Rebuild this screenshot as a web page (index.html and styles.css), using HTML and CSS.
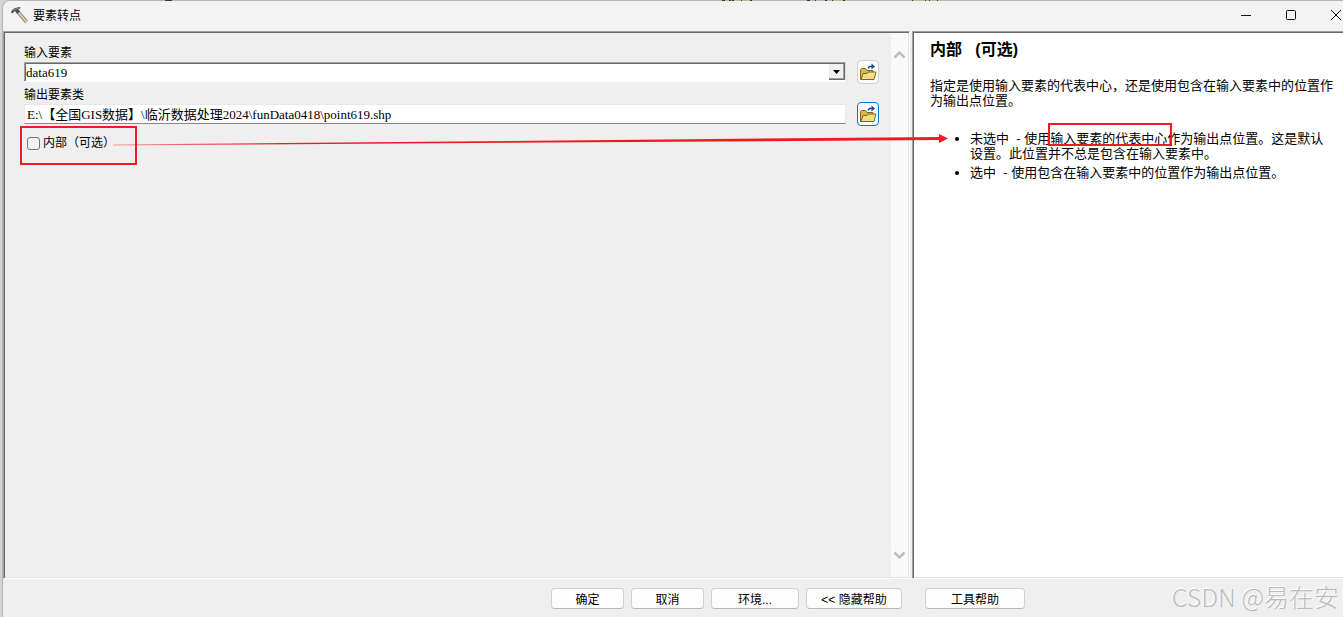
FILE: index.html
```html
<!DOCTYPE html>
<html lang="zh-CN">
<head>
    <meta charset="UTF-8">
    <meta name="viewport" content="width=device-width, initial-scale=1.0">
    <title>要素转点</title>
    <link rel="stylesheet" href="styles.css">
</head>
<body>
    <div class="window">
        <svg class="backdrop" width="780" height="1" aria-hidden="true">
            <path d="M0 .5h7M557 .5h30M642 .5h9M660 .5h20M747 .5h14M764 .5h9" stroke="#38383c"/>
            <path d="M560 .5h4M566 .5h1M569 .5h7M577 .5h8M645 .5h5M662 .5h5M668 .5h10M748 .5h12M765 .5h7" stroke="#bbb98c"/>
        </svg>
        <header class="titlebar">
            <svg class="hammer" width="18" height="18" viewBox="0 0 18 18" aria-hidden="true">
                <path d="M7 5L15.500 15" stroke="#8b8474" stroke-width="3.600"/>
                <path d="M7 5L15.500 15" stroke="#dcd3bb" stroke-width="1.800"/>
                <path d="M0 5.500L1 3 4 1 9 0 9.500 1 7.500 2.500 9 4.500 6 7 4.500 4.500 3 4.500 1.500 6.500z" fill="#4a4f50"/>
                <path d="M2 3.500L5 2 8 1.500" stroke="#8d9494" fill="none"/>
            </svg>
            <h1 class="title">要素转点</h1>
            <div class="window-buttons">
                <button class="window-button" aria-label="最小化">
                    <svg width="12" height="12"><path d="M1 6.500h10" stroke="#111"/></svg>
                </button>
                <button class="window-button" aria-label="最大化">
                    <svg width="12" height="12"><rect x="1.500" y="1.500" width="9" height="9" rx="1" fill="none" stroke="#111"/></svg>
                </button>
                <button class="window-button" aria-label="关闭">
                    <svg width="12" height="12"><path d="M1 1l10 10M11 1L1 11" stroke="#111"/></svg>
                </button>
            </div>
        </header>

        <main class="content">
            <section class="pane params">
                <form class="form">
                    <label class="label" for="input">输入要素</label>
                    <div class="row">
                        <div class="combo">
                            <select class="select" id="input">
                                <option>data619</option>
                            </select>
                            <span class="drop"><svg width="7" height="4"><path d="M0 0h7L3.500 4z" fill="#000"/></svg></span>
                        </div>
                        <button type="button" class="browse" aria-label="浏览输入要素">
                            <svg width="18" height="18" viewBox="0 0 18 18">
                                <path d="M1.500 16.500v-10l1-1h4l1.500 2h6v9z" fill="#d9b84c" stroke="#7d681f"/>
                                <path d="M2 16.500l2-6h4l1-1.500h8l-2 7.500z" fill="#f3dc86" stroke="#7d681f"/>
                                <path d="M9.500 5.500V4.500L10.500 3.500h3" fill="none" stroke="#174a8c" stroke-width="1.500"/>
                                <path d="M12.500 .5l3.500 3-3.500 3z" fill="#174a8c"/>
                            </svg>
                        </button>
                    </div>
                    <label class="label" for="output">输出要素类</label>
                    <div class="row">
                        <input class="text" id="output" type="text" value="E:\【全国GIS数据】\临沂数据处理2024\funData0418\point619.shp">
                        <button type="button" class="browse focused" aria-label="浏览输出要素类">
                            <svg width="18" height="18" viewBox="0 0 18 18">
                                <path d="M1.500 16.500v-10l1-1h4l1.500 2h6v9z" fill="#d9b84c" stroke="#7d681f"/>
                                <path d="M2 16.500l2-6h4l1-1.500h8l-2 7.500z" fill="#f3dc86" stroke="#7d681f"/>
                                <path d="M9.500 5.500V4.500L10.500 3.500h3" fill="none" stroke="#174a8c" stroke-width="1.500"/>
                                <path d="M12.500 .5l3.500 3-3.500 3z" fill="#174a8c"/>
                            </svg>
                        </button>
                    </div>
                    <div class="option">
                        <input class="check" id="inside" type="checkbox">
                        <label for="inside">内部（可选）</label>
                    </div>
                </form>
                <div class="scrollbar">
                    <svg width="13" height="9"><path d="M1.500 7.500l5-5 5 5" fill="none" stroke="#bdbdbd" stroke-width="2.500"/></svg>
                    <svg width="13" height="9"><path d="M1.500 1.500l5 5 5-5" fill="none" stroke="#bdbdbd" stroke-width="2.500"/></svg>
                </div>
            </section>

            <aside class="pane help">
                <h2 class="help-title">内部&nbsp;&nbsp; (可选)</h2>
                <p class="help-text">指定是使用输入要素的代表中心，还是使用包含在输入要素中的位置作为输出点位置。</p>
                <ul class="help-list">
                    <li>未选中&nbsp; - 使用<span class="mark">输入要素的代表中心</span>作为输出点位置。这是默认设置。此位置并不总是包含在输入要素中。</li>
                    <li>选中&nbsp; - 使用包含在输入要素中的位置作为输出点位置。</li>
                </ul>
            </aside>

            <!-- arrow from the option to its description -->
            <svg class="arrow" viewBox="0 0 835 16" preserveAspectRatio="none" aria-hidden="true">
                <defs>
                    <linearGradient id="fade">
                        <stop offset="0" stop-color="#ed1c24" stop-opacity=".4"/>
                        <stop offset=".2" stop-color="#ed1c24"/>
                    </linearGradient>
                </defs>
                <path d="M0 12.500L827 5V8L0 13.500z" fill="url(#fade)"/>
                <path d="M826 2L835 6.500 826 11z" fill="#ed1c24"/>
            </svg>
        </main>

        <footer class="footer">
            <button class="button">确定</button>
            <button class="button">取消</button>
            <button class="button wide">环境...</button>
            <button class="button wider">&lt;&lt; 隐藏帮助</button>
            <button class="button tool-help">工具帮助</button>
            <span class="watermark">CSDN @易在安</span>
        </footer>
    </div>
</body>
</html>
```
FILE: styles.css
```css
*{
    box-sizing: border-box;
    margin: 0;
    padding: 0;
}

body{
    background-color: #d4d4d4;
    color: #000;
    font-family: "Liberation Sans", "Noto Sans CJK SC", sans-serif;
    font-size: 12px;
    overflow: hidden;
}

button, input, select{
    font: inherit;
    color: inherit;
}

.window{
    position: relative;
    display: flex;
    flex-direction: column;
    height: 100vh;
    margin-left: 2px;
    background-color: #efefef;
    border-top: 1px solid #b4b4b4;
    border-left: 1px solid #b4b4b4;
    border-top-left-radius: 8px;
}

.backdrop{
    position: absolute;
    top: -1px;
    left: 162px;
}

/* title bar */
.titlebar{
    display: flex;
    align-items: center;
    height: 30px;
    padding-left: 8px;
    background-color: #f3f3f3;
    border-top-left-radius: 8px;
}

.title{
    flex: 1;
    margin-left: 4px;
    font-size: 12px;
    font-weight: normal;
    line-height: 16px;
}

.window-buttons{
    display: flex;
    margin-right: -15px;
}

.window-button{
    display: flex;
    align-items: center;
    justify-content: center;
    width: 45px;
    height: 30px;
    padding-bottom: 2px;
    border: none;
    background-color: transparent;
}

/* panes */
.content{
    position: relative;
    flex: 1;
    display: flex;
    gap: 2px;
}

.pane{
    border: 1px solid;
    border-color: #a0a0a0 #fff #fff #a0a0a0;
    box-shadow: inset 1px 1px #696969, inset -1px -1px #e3e3e3;
}

.params{
    flex: 1;
    display: flex;
    padding: 1px;
}

.help{
    width: 431px;
    padding: 10px 8px 0 17px;
    background-color: #fff;
    border-right: none;
    box-shadow: inset 1px 1px #696969, inset 0 -1px #e3e3e3;
}

.form{
    flex: 1;
    padding: 11px 12px 0 15px;
}

.label{
    display: block;
    height: 16px;
    margin-left: 4px;
    line-height: 18px;
}

.row{
    display: flex;
    align-items: center;
    gap: 11px;
    height: 24px;
    margin-left: 4px;
}

.row + .label{
    margin-top: 2px;
}

.combo{
    position: relative;
    flex: 1;
    display: flex;
}

.select, .text{
    flex: 1;
    min-width: 0;
    height: 20px;
    background-color: #fff;
    border-radius: 0;
    font-family: "Liberation Serif", "Noto Sans CJK SC", serif;
    font-size: 13px;
}

.select{
    appearance: none;
    padding-left: 1px;
    border: 1px solid;
    border-color: #a0a0a0 #e3e3e3 #fff #a0a0a0;
    box-shadow: inset 1px 1px #696969;
}

.text{
    padding: 0 2px 2px;
    border: 1px solid #e8e8e8;
    border-bottom-color: #868686;
}

.drop{
    position: absolute;
    top: 2px;
    right: 1px;
    display: flex;
    align-items: center;
    justify-content: center;
    width: 16px;
    height: 16px;
    background-color: #f0f0f0;
    border-right: 1px solid #696969;
    border-bottom: 1px solid #696969;
    box-shadow: inset -1px -1px #a0a0a0;
    pointer-events: none;
}

.browse{
    display: flex;
    align-items: center;
    justify-content: center;
    width: 22px;
    height: 24px;
    background-color: #fdfdfd;
    border: 1px solid #d0d0d0;
    border-radius: 4px;
}

.focused{
    border-color: #0078d4;
}

.option{
    display: flex;
    align-items: center;
    gap: 3px;
    width: 117px;
    height: 39px;
    padding: 0 0 5px 5px;
    border: 2px solid #ed1c24;
    line-height: 16px;
}

.check{
    appearance: none;
    width: 13px;
    height: 13px;
    background-color: #f3f3f3;
    border: 1px solid #777;
    border-radius: 3px;
}

.check:checked{
    background-color: #0067c0;
}

.scrollbar{
    display: flex;
    flex-direction: column;
    align-items: center;
    justify-content: space-between;
    width: 17px;
    padding: 17px 0;
    background-color: #f9f9f9;
}

/* help */
.help-title{
    font-size: 16px;
    line-height: 16px;
}

.help-text{
    margin-top: 20px;
    font-size: 13px;
    line-height: 15px;
}

.help-list{
    margin-top: 23px;
    padding-left: 40px;
    font-size: 13px;
    line-height: 15px;
}

.help-list li{
    margin-bottom: 4px;
}

.mark{
    position: relative;
}

.mark::after{
    content: "";
    position: absolute;
    top: -8px;
    right: -5px;
    bottom: 0;
    left: -2px;
    border: 2px solid #ed1c24;
}

.arrow{
    position: absolute;
    top: 101px;
    left: 110px;
    width: calc(100% - 505px);
    height: 16px;
    pointer-events: none;
}

/* buttons */
.footer{
    position: relative;
    display: flex;
    justify-content: flex-end;
    gap: 7px;
    height: 38px;
    padding: 9px 318px 0 0;
}

.button{
    width: 73px;
    height: 21px;
    padding-top: 2px;
    background-color: #fdfdfd;
    border: 1px solid #d0d0d0;
    border-bottom-color: #b8b8b8;
    border-radius: 4px;
    line-height: 16px;
    white-space: nowrap;
}

.wide{
    width: 88px;
}

.wider{
    width: 96px;
}

.tool-help{
    width: 100px;
    margin-left: 16px;
}

.watermark{
    position: absolute;
    right: 4px;
    bottom: 4px;
    color: #bcbcbc;
    font-family: "Noto Sans CJK SC", sans-serif;
    font-size: 25px;
    font-weight: 300;
    line-height: 34px;
    text-shadow: -1px -1px #fff;
    white-space: nowrap;
}
```
